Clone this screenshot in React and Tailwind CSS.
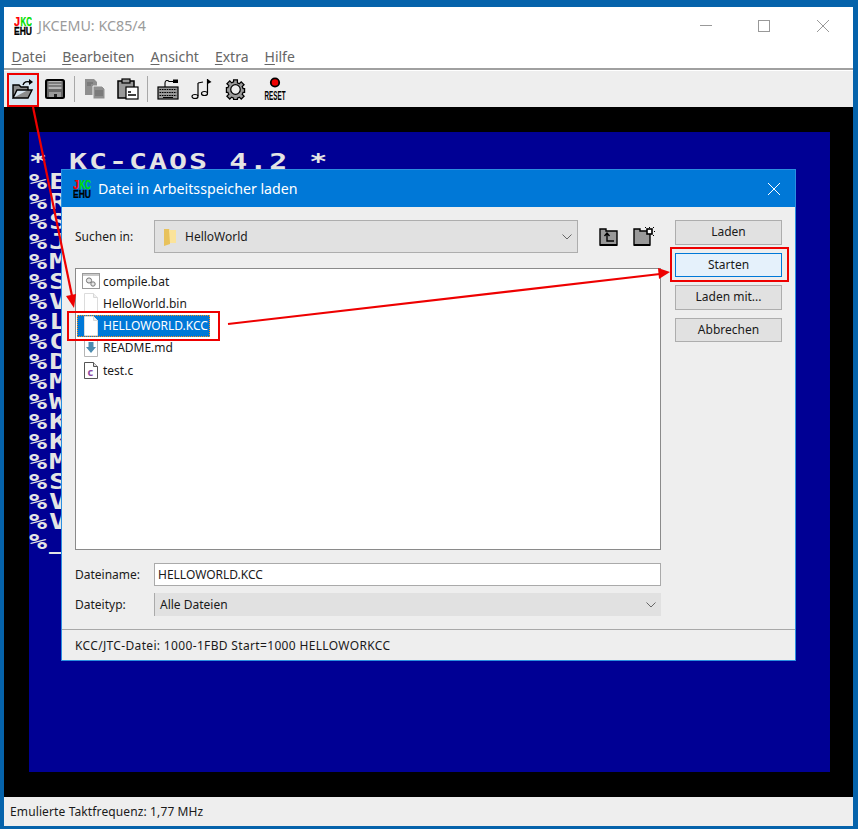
import React from "react";

const menus = ["Datei", "Bearbeiten", "Ansicht", "Extra", "Hilfe"];
const caosRows = ["E", "R", "S", "J", "M", "S", "V", "L", "C", "D", "M", "W", "K", "K", "M", "S", "V", "V", "_"];

// JKCEMU logo, kept as real svg text squeezed to the icon box
function Logo({ className }) {
  return (
    <svg viewBox="0 0 18 18" className={className}>
      <text x="0" y="9" fontSize="12.5" fontWeight="700" fontFamily="Liberation Sans, sans-serif" textLength="6" lengthAdjust="spacingAndGlyphs" fill="#ff0000" stroke="#ff0000" strokeWidth="0.3">J</text>
      <text x="6.5" y="9" fontSize="12.5" fontWeight="700" fontFamily="Liberation Sans, sans-serif" textLength="11.5" lengthAdjust="spacingAndGlyphs" fill="#00e000" stroke="#00e000" strokeWidth="0.3">KC</text>
      <text x="0" y="18" fontSize="10.5" fontWeight="700" fontFamily="Liberation Sans, sans-serif" textLength="18" lengthAdjust="spacingAndGlyphs" fill="#000" stroke="#000" strokeWidth="0.3">EHU</text>
    </svg>
  );
}

function OpenIcon() {
  return (
    <svg width="22" height="22" viewBox="0 0 22 22" fill="none">
      <path d="M1 20V7h6l2 2h7v3H5L1 20h15l4-8h-4" fill="#8c8c8c" stroke="#000" strokeWidth="1.4" />
      <path d="M11 7c1-3 4-4 7-3" stroke="#000" strokeWidth="1.4" />
      <path d="M17 1l4 3-4 3z" fill="#000" />
    </svg>
  );
}

function SaveIcon() {
  return (
    <svg width="20" height="20" viewBox="0 0 20 20">
      <rect x="1" y="1" width="18" height="18" rx="1.5" fill="#666" stroke="#000" strokeWidth="2" />
      <rect x="3.5" y="2" width="13" height="8" fill="#b5b5b5" />
      <rect x="3.5" y="3.5" width="13" height="1" fill="#444" />
      <rect x="3.5" y="6.5" width="13" height="1" fill="#444" />
      <rect x="4" y="13" width="12" height="5" fill="#999" />
      <rect x="9" y="15" width="3" height="3" fill="#222" />
    </svg>
  );
}

function CopyIcon() {
  return (
    <svg width="22" height="22" viewBox="0 0 22 22">
      <path d="M1 1h9l3 3v13H1z" fill="#8f8f8f" />
      <path d="M9 8h9l3 3v10H9z" fill="#8f8f8f" stroke="#eee" strokeWidth="1" />
      <path d="M11 13h8M11 15h8M11 17h8M3 5h6M3 7h4" stroke="#666" strokeWidth="1" />
    </svg>
  );
}

function PasteIcon() {
  return (
    <svg width="22" height="22" viewBox="0 0 22 22">
      <rect x="1" y="3" width="16" height="17" fill="#999" stroke="#000" strokeWidth="1.5" />
      <rect x="5" y="1" width="8" height="4" fill="#999" stroke="#000" strokeWidth="1.2" />
      <rect x="9" y="9" width="12" height="12" fill="#fff" stroke="#000" strokeWidth="1.2" />
      <path d="M11 14h3M11 17h8" stroke="#000" strokeWidth="1.4" />
    </svg>
  );
}

function KeyboardIcon() {
  return (
    <svg width="22" height="22" viewBox="0 0 22 22">
      <path d="M8 9V5c0-3 3-3 4-1.5h6" fill="none" stroke="#000" strokeWidth="1.1" />
      <rect x="16" y="1.5" width="5" height="3.5" fill="#000" />
      <rect x="1" y="9" width="20" height="12" fill="#999" stroke="#000" strokeWidth="1.2" />
      <path d="M2.5 11.5h17M2.5 14.5h17M2.5 17.5h17" stroke="#000" strokeWidth="1.2" strokeDasharray="1.6 0.8" />
      <path d="M6 19.5h10" stroke="#000" strokeWidth="1" />
    </svg>
  );
}

function NotesIcon() {
  return (
    <svg width="22" height="22" viewBox="0 0 22 22" fill="none">
      <ellipse cx="4" cy="18.5" rx="3" ry="2" stroke="#000" strokeWidth="1.2" fill="#eee" />
      <ellipse cx="13.5" cy="15.5" rx="3" ry="2" stroke="#000" strokeWidth="1.2" fill="#eee" />
      <path d="M7 18V5M16.5 15V1" stroke="#000" strokeWidth="1.2" />
      <path d="M7 5l5-1" stroke="#000" strokeWidth="1.1" />
      <path d="M16.5 1l4 3-4 2z" fill="#000" />
    </svg>
  );
}

function GearIcon() {
  return (
    <svg width="21" height="21" viewBox="0 0 22 22">
      <path d="M9 1h4v3l2 1 2-2 3 3-2 2 1 2h1.5v4H19l-1 2 2 2-3 3-2-2-2 1v1.5H9V20l-2-1-2 2-3-3 2-2-1-2H1.500V9H3l1-2-2-2 3-3 2 2 2-1z" fill="#9a9a9a" stroke="#000" strokeWidth="1.3" />
      <circle cx="11" cy="11" r="5" fill="#eee" stroke="#000" strokeWidth="1.3" />
    </svg>
  );
}

function ResetIcon() {
  return (
    <svg width="22" height="24" viewBox="0 0 22 24">
      <circle cx="11" cy="5.5" r="4.2" fill="#ee0000" stroke="#000" strokeWidth="1.8" />
      <text x="0.5" y="23" fontSize="12" fontWeight="700" fontFamily="Liberation Sans, sans-serif" textLength="21" lengthAdjust="spacingAndGlyphs" fill="#000">RESET</text>
    </svg>
  );
}

function ToolBtn({ children, active, className = "" }) {
  return (
    <div className={`w-[32px] h-[34px] flex items-center justify-center ${active ? "bg-[#d9e6f1]" : ""} ${className}`}>
      {children}
    </div>
  );
}

function Chevron({ className }) {
  return (
    <svg width="10" height="6" viewBox="0 0 10 6" fill="none" className={className}>
      <path d="M0.5 0.5L5 5L9.5 0.5" stroke="#666" strokeWidth="1" />
    </svg>
  );
}

function FolderSmall() {
  return (
    <svg width="13" height="18" viewBox="0 0 13 18">
      <path d="M0 1h5l1 2v13l-6 2z" fill="#e8c25c" />
      <path d="M5 2h7v13H6z" fill="#fbe39a" />
    </svg>
  );
}

function FolderUp() {
  return (
    <svg width="20" height="20" viewBox="0 0 20 20">
      <path d="M1 18V2h6v2h11v14z" fill="#999" stroke="#000" strokeWidth="1.4" />
      <path d="M1 18h17" stroke="#000" strokeWidth="2" />
      <path d="M8 7v7h7M5.5 9L8 6l2.5 3" fill="none" stroke="#000" strokeWidth="1.4" />
    </svg>
  );
}

function FolderNew() {
  return (
    <svg width="22" height="20" viewBox="0 0 22 20">
      <path d="M1 18V2h6v2h10v14z" fill="#999" stroke="#000" strokeWidth="1.4" />
      <path d="M1 18h16" stroke="#000" strokeWidth="2" />
      <rect x="14" y="2" width="5" height="5" fill="#fff" stroke="#000" strokeWidth="1.6" />
      <path d="M16.5 0v1M21 4.5h1M20 1l1-1M20 8l1 1M13 1l-1-1" stroke="#000" strokeWidth="1" />
    </svg>
  );
}

function DocBlank() {
  return (
    <svg width="14" height="20" viewBox="0 0 14 20">
      <path d="M0.5 0.5h9l4 4v15h-13z" fill="#fff" stroke="#dcdcdc" />
      <path d="M9.5 0.5v4h4" fill="#f0f0f0" stroke="#d8d8d8" />
    </svg>
  );
}

function BatIcon() {
  return (
    <svg width="18" height="16" viewBox="0 0 18 16">
      <rect x="0.5" y="0.5" width="17" height="15" fill="#fff" stroke="#999" />
      <rect x="1" y="1" width="16" height="2" fill="#c9c9c9" />
      <circle cx="7" cy="7.5" r="2.6" fill="#e6e6e6" stroke="#777" />
      <circle cx="11" cy="11" r="2.2" fill="#e6e6e6" stroke="#777" />
    </svg>
  );
}

function ReadmeIcon() {
  return (
    <svg width="14" height="18" viewBox="0 0 14 18">
      <path d="M0.5 0.5h13v17h-13z" fill="#fff" stroke="#b5b5b5" />
      <path d="M4.5 3h5v5h2.5l-5 6-5-6h2.5z" fill="#4d8cb0" />
    </svg>
  );
}

function CSourceIcon() {
  return (
    <svg width="14" height="17" viewBox="0 0 14 17">
      <path d="M0.5 0.5h9l4 4v12h-13z" fill="#fff" stroke="#555" />
      <path d="M9.5 0.5v4h4" fill="#ddd" stroke="#555" />
      <text x="3.5" y="13.5" fontSize="11" fontWeight="700" fontFamily="Noto Sans, sans-serif" fill="#8e4ba3">c</text>
    </svg>
  );
}

const files = [
  { name: "compile.bat", icon: <BatIcon /> },
  { name: "HelloWorld.bin", icon: <DocBlank /> },
  { name: "HELLOWORLD.KCC", icon: <DocBlank />, selected: true },
  { name: "README.md", icon: <ReadmeIcon /> },
  { name: "test.c", icon: <CSourceIcon /> },
];

const buttons = ["Laden", "Starten", "Laden mit...", "Abbrechen"];

export default function App() {
  return (
    <div className="relative w-[858px] h-[829px] overflow-hidden bg-[#0563ab] pt-[7px] pl-[4px] pr-[5px] pb-[3px] flex flex-col font-['Noto_Sans',sans-serif] text-[12px] text-[#1a1a1a]">
      {/* title bar */}
      <div className="h-[37px] bg-white flex items-center shrink-0 relative">
        <Logo className="w-[18px] h-[18px] ml-[10px]" />
        <span className="ml-[6px] text-[14.3px] text-[#9b9b9b]">JKCEMU: KC85/4</span>
        <div className="ml-auto flex items-center text-[#999]">
          <div className="w-[12px] h-px bg-[#999] mr-[46px]" />
          <div className="w-[12px] h-[12px] border border-[#999] mr-[47px]" />
          <svg width="12" height="12" viewBox="0 0 12 12" className="mr-[24px]">
            <path d="M0 0L12 12M12 0L0 12" stroke="#999" strokeWidth="1" />
          </svg>
        </div>
      </div>

      {/* menu */}
      <div className="h-[24px] bg-white flex items-center shrink-0 pl-[7.5px] pt-px gap-[16px] text-[14px] text-[#666]">
        {menus.map((m) => (
          <span key={m}>
            <span className="underline underline-offset-2">{m[0]}</span>
            {m.slice(1)}
          </span>
        ))}
      </div>
      <div className="h-[2px] bg-[#a0a0a0] shrink-0" />
      <div className="h-px bg-white shrink-0" />

      {/* toolbar */}
      <div className="h-[36px] bg-[#eeeeee] flex items-center shrink-0 pl-[3px]">
        <ToolBtn active><OpenIcon /></ToolBtn>
        <ToolBtn><SaveIcon /></ToolBtn>
        <div className="w-px h-[26px] bg-[#a8a8a8] ml-[3px]" />
        <ToolBtn className="ml-[4px]"><CopyIcon /></ToolBtn>
        <ToolBtn className="ml-px"><PasteIcon /></ToolBtn>
        <div className="w-px h-[26px] bg-[#a8a8a8] ml-[3px]" />
        <ToolBtn className="ml-[4px]"><KeyboardIcon /></ToolBtn>
        <ToolBtn className="ml-[2px]"><NotesIcon /></ToolBtn>
        <ToolBtn className="ml-px"><GearIcon /></ToolBtn>
        <ToolBtn className="ml-[8px]"><ResetIcon /></ToolBtn>
      </div>

      {/* emulator screen */}
      <div className="flex-1 bg-black pt-[25px] pl-[25px]">
        <div className="w-[801px] h-[640px] bg-[#000094] pt-[20px] overflow-hidden">
          <div className="origin-left scale-x-[1.36] font-['DejaVu_Sans_Mono',monospace] font-bold text-[22px] leading-[20px] tracking-[1.47px] text-[#e4e4e4] whitespace-pre">
            <div>* KC-CAOS 4.2 *</div>
            {caosRows.map((c, i) => (
              <div key={i}>{"%" + c}</div>
            ))}
          </div>
        </div>
      </div>

      {/* status bar */}
      <div className="h-[29px] bg-[#eeeeee] flex items-center pl-[6px] shrink-0 tracking-[0.12px]">Emulierte Taktfrequenz: 1,77 MHz</div>

      {/* file dialog */}
      <div className="absolute left-[61px] top-[169px] w-[735px] h-[492px] border border-[#2a8fe0] bg-[#eeeeee] flex flex-col">
        <div className="h-[37px] bg-[#0078d7] flex items-center shrink-0 text-white">
          <Logo className="w-[18px] h-[18px] ml-[11px]" />
          <span className="ml-[7px] text-[14.2px]">Datei in Arbeitsspeicher laden</span>
          <svg width="12" height="12" viewBox="0 0 12 12" className="ml-auto mr-[15px]">
            <path d="M0 0L12 12M12 0L0 12" stroke="#fff" strokeWidth="1" />
          </svg>
        </div>

        <div className="flex flex-1 pl-[13px] pt-[13px]">
          <div className="w-[586px] flex flex-col">
            <div className="flex items-center h-[33px]">
              <span className="w-[79px] pt-px">Suchen in:</span>
              <div className="w-[424px] h-full bg-[#e1e1e1] border border-[#adadad] flex items-center pl-[9px] pr-[5px]">
                <FolderSmall />
                <span className="ml-[8px] pt-px">HelloWorld</span>
                <Chevron className="ml-auto" />
              </div>
              <div className="ml-[21px]"><FolderUp /></div>
              <div className="ml-[14px]"><FolderNew /></div>
            </div>

            <div className="mt-[15px] h-[282px] bg-white border border-[#8a8a8a] pt-px pl-px">
              {files.map((f) => (
                <div key={f.name} className="h-[22.25px] flex">
                  <div className={`flex items-center h-full ${f.selected ? "bg-[#0078d7] text-white outline-1 outline-dotted -outline-offset-1 outline-[#ff8c1a]" : ""}`}>
                    <div className="w-[26px] flex justify-center pl-[1px] shrink-0">{f.icon}</div>
                    <span className="pr-[2px] pt-px">{f.name}</span>
                  </div>
                </div>
              ))}
            </div>

            <div className="flex items-center h-[23px] mt-[13px]">
              <span className="w-[79px]">Dateiname:</span>
              <div className="flex-1 h-full bg-white border border-[#aaaaaa] flex items-center pl-[3px]">HELLOWORLD.KCC</div>
            </div>
            <div className="flex items-center h-[23px] mt-[7px]">
              <span className="w-[79px]">Dateityp:</span>
              <div className="flex-1 h-full bg-[#e1e1e1] border-l border-[#aaaaaa] flex items-center pl-[5px] pr-[5px]">
                Alle Dateien
                <Chevron className="ml-auto" />
              </div>
            </div>
          </div>

          <div className="w-[107px] ml-[14px] flex flex-col gap-[8px]">
            {buttons.map((b) => (
              <div
                key={b}
                className={`h-[24.5px] flex items-center justify-center border ${
                  b === "Starten" ? "bg-[#e5f1fb] border-[#0078d7]" : "bg-[#e1e1e1] border-[#adadad]"
                }`}
              >
                {b}
              </div>
            ))}
          </div>
        </div>

        <div className="h-[31px] border-t border-[#a8a8a8] flex items-center pl-[13px] pt-px shrink-0 tracking-[0.34px]">
          KCC/JTC-Datei: 1000-1FBD Start=1000 HELLOWORKCC
        </div>
      </div>

      {/* red markers over everything */}
      <div className="absolute left-[7px] top-[73px] w-[32px] h-[34px] border-2 border-[#ee0000]" />
      <div className="absolute left-[67px] top-[311px] w-[153px] h-[30px] border-2 border-[#ee0000]" />
      <div className="absolute left-[670px] top-[247px] w-[119px] h-[35px] border-2 border-[#ee0000]" />
      <svg width="858" height="829" viewBox="0 0 858 829" className="absolute left-0 top-0 pointer-events-none">
        <path d="M33 107L72 296" stroke="#ee0000" strokeWidth="2.2" fill="none" />
        <path d="M74 308L66 296L76 294z" fill="#ee0000" />
        <path d="M228 324L660 274" stroke="#ee0000" strokeWidth="2.2" fill="none" />
        <path d="M670 272L658 268L659 279z" fill="#ee0000" />
      </svg>
    </div>
  );
}
